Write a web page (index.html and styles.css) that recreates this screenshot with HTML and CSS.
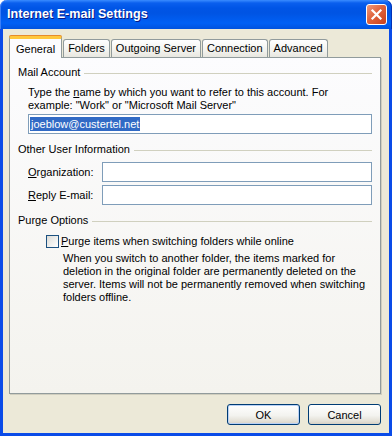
FILE: index.html
```html
<!DOCTYPE html>
<html lang="en">
<head>
  <meta charset="UTF-8">
  <title>Internet E-mail Settings</title>
  <link rel="stylesheet" href="styles.css">
</head>
<body>
  <div class="window">
    <div class="titlebar">
      <span class="title">Internet E-mail Settings</span>
      <button class="close" title="Close">
        <svg viewBox="0 0 21 21" width="21" height="21">
          <path d="M6.5 6.5L14.5 14.5M14.5 6.5L6.5 14.5"/>
        </svg>
      </button>
    </div>

    <div class="client">
      <div class="tabs">
        <div class="tab selected">General</div>
        <div class="tab">Folders</div>
        <div class="tab">Outgoing Server</div>
        <div class="tab">Connection</div>
        <div class="tab">Advanced</div>
      </div>

      <div class="panel">
        <div class="group">
          <div class="group-title"><span>Mail Account</span></div>
          <div class="group-body">
            <p class="hint">Type the <u>n</u>ame by which you want to refer to this account. For<br>example: "Work" or "Microsoft Mail Server"</p>
            <div class="field account"><span class="selected-text">joeblow@custertel.net</span></div>
          </div>
        </div>

        <div class="group">
          <div class="group-title"><span>Other User Information</span></div>
          <div class="group-body rows">
            <div class="row">
              <label class="label"><u>O</u>rganization:</label>
              <div class="field"></div>
            </div>
            <div class="row">
              <label class="label"><u>R</u>eply E-mail:</label>
              <div class="field"></div>
            </div>
          </div>
        </div>

        <div class="group">
          <div class="group-title"><span>Purge Options</span></div>
          <div class="group-body purge">
            <label class="check">
              <span class="checkbox"></span>
              <span><u>P</u>urge items when switching folders while online</span>
            </label>
            <p class="note">When you switch to another folder, the items marked for<br>deletion in the original folder are permanently deleted on the<br>server. Items will not be permanently removed when switching<br>folders offline.</p>
          </div>
        </div>
      </div>

      <div class="buttons">
        <button class="btn default">OK</button>
        <button class="btn">Cancel</button>
      </div>
    </div>
  </div>
</body>
</html>
```

FILE: styles.css
```css
* {
  margin: 0;
  padding: 0;
  box-sizing: border-box;
}

body {
  background: #fff;
  font-family: "Liberation Sans", Arial, sans-serif;
  font-size: 11px;
  line-height: 13px;
  color: #000;
}

.window {
  width: 392px;
  height: 436px;
  display: flex;
  flex-direction: column;
}

/* Barra de titulo */
.titlebar {
  height: 29px;
  flex-shrink: 0;
  display: flex;
  align-items: center;
  justify-content: space-between;
  padding: 0 5px 0 7px;
  border-radius: 7px 7px 0 0;
  background: linear-gradient(to bottom, #3a8cff 0, #0a5fee 3px, #0055e6 8px, #0054e3 45%, #0060f5 80%, #0052de 100%);
  box-shadow: inset 1px 0 0 #3c7ff7, inset -1px 0 0 #0031b8;
}

.title {
  font-family: "Liberation Sans", Arial, sans-serif;
  font-weight: bold;
  font-size: 12.6px;
  color: #fff;
  text-shadow: 1px 1px 0 #0a1883;
}

.close {
  width: 21px;
  height: 21px;
  border: 1px solid #fff;
  border-radius: 3px;
  background: linear-gradient(135deg, #ee9a7c 0, #e0643d 45%, #c8401c 100%);
  display: flex;
  align-items: center;
  justify-content: center;
}

.close svg {
  display: block;
  margin: -1px;
  stroke: #fff;
  stroke-width: 2.2;
  stroke-linecap: square;
  fill: none;
}

/* Area do cliente */
.client {
  flex: 1;
  display: flex;
  flex-direction: column;
  background: #ece9d8;
  border-left: 3px solid #0a4be8;
  border-right: 3px solid #0a4be8;
  border-bottom: 3px solid #0a4be8;
  box-shadow: -1px 0 0 #0029b5, 1px 0 0 #0029b5;
  padding: 7px 8px 8px 6px;
}

.tabs {
  display: flex;
  align-items: flex-end;
  height: 21px;
  gap: 1px;
  position: relative;
  z-index: 1;
}

.tab {
  height: 18px;
  padding: 2px 4px 0;
  border: 1px solid #919b9c;
  border-bottom: none;
  border-radius: 3px 3px 0 0;
  background: linear-gradient(to bottom, #ffffff, #f3f3ef 60%, #e8e7e0);
  white-space: nowrap;
}

.tab.selected {
  height: 22px;
  margin-bottom: -1px;
  padding: 4px 6px 0;
  border-top: 3px solid #ffc83c;
  box-shadow: 0 -1px 0 #e68b2c;
  background: #fcfcfe;
  border-radius: 2px 2px 0 0;
}

.panel {
  flex: 1;
  border: 1px solid #919b9c;
  background: linear-gradient(to bottom, #fcfcfe, #f4f3ee);
  box-shadow: 1px 1px 0 #d0cebf;
  padding: 8px 8px 0;
  display: flex;
  flex-direction: column;
  gap: 9px;
}

.group-title {
  display: flex;
  align-items: center;
  gap: 4px;
  white-space: nowrap;
}

.group-title::after {
  content: '';
  flex: 1;
  height: 1px;
  background: #d0d0bf;
  margin-top: 1px;
}

.group-body {
  padding-left: 10px;
  padding-top: 7px;
}

.hint {
  white-space: nowrap;
}

.field {
  height: 20px;
  border: 1px solid #7f9db9;
  background: #fff;
  flex: 1;
  padding: 2px 1px;
}

.field.account {
  margin-top: 2px;
}

.selected-text {
  display: inline-block;
  background: #316ac5;
  color: #fff;
  line-height: 14px;
  padding: 0 1px;
}

.rows {
  display: flex;
  flex-direction: column;
  gap: 3px;
  padding-top: 6px;
}

.row {
  display: flex;
  align-items: center;
}

.label {
  width: 74px;
  flex-shrink: 0;
}

.purge {
  padding-left: 28px;
  padding-top: 8px;
}

.check {
  display: flex;
  align-items: center;
  gap: 2px;
}

.checkbox {
  width: 13px;
  height: 13px;
  border: 1px solid #1c5180;
  background: linear-gradient(135deg, #dcdcd7, #ffffff);
}

.note {
  padding-left: 17px;
  padding-top: 4px;
  white-space: nowrap;
}

.buttons {
  display: flex;
  justify-content: flex-end;
  gap: 8px;
  padding-top: 10px;
}

.btn {
  width: 73px;
  height: 21px;
  font-family: inherit;
  font-size: 11px;
  color: #000;
  border: 1px solid #003c74;
  border-radius: 3px;
  background: linear-gradient(to bottom, #ffffff, #f3f3ef 55%, #e3e0d6 85%, #d6d0c5);
}

.btn.default {
  box-shadow: inset 0 0 0 1px #b9d1f5;
}
```
